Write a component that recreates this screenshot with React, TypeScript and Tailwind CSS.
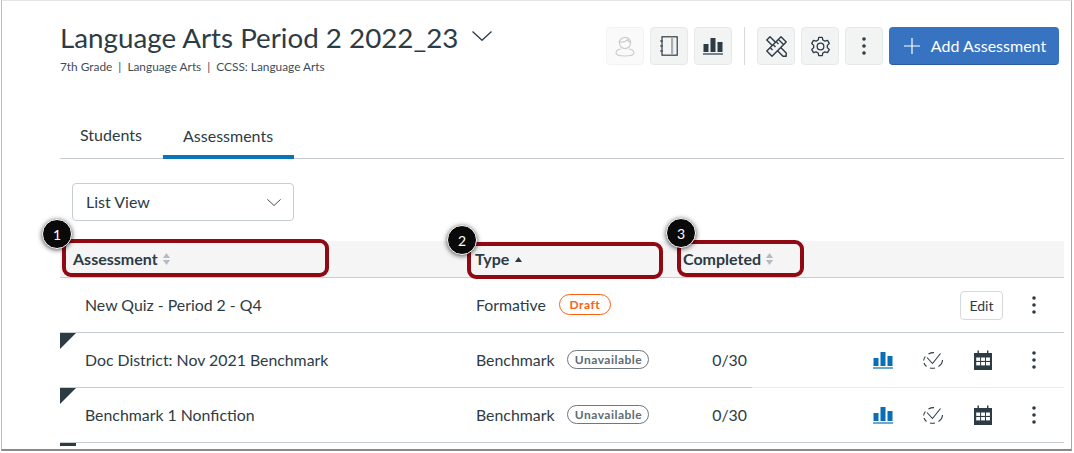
const dark = '#2d3b45';

const BarsIcon = ({ color = dark }: { color?: string }) => (
  <svg width="20" height="18" viewBox="0 0 20 18" fill={color}>
    <rect x="0.5" y="7" width="5" height="8" />
    <rect x="7.5" y="1" width="5" height="14" />
    <rect x="14.5" y="5" width="5" height="10" />
    <rect x="0" y="16.4" width="20" height="1.2" />
  </svg>
);

const KebabIcon = () => (
  <svg width="4" height="18" viewBox="0 0 4 18" fill={dark}>
    <circle cx="2" cy="2" r="1.8" />
    <circle cx="2" cy="9" r="1.8" />
    <circle cx="2" cy="16" r="1.8" />
  </svg>
);

const ChevronDown = ({ w, h }: { w: number; h: number }) => (
  <svg width={w} height={h} viewBox="0 0 20 10" fill="none" stroke={dark} strokeWidth="1.3">
    <path d="M0.5 0.5 L10 9.3 L19.5 0.5" />
  </svg>
);

const SortIcon = () => (
  <svg width="7" height="12" viewBox="0 0 7 12" fill="#b4bac0">
    <path d="M3.5 0 L7 5 H0 Z" />
    <path d="M3.5 12 L7 7 H0 Z" />
  </svg>
);

const ClockCheck = () => (
  <svg width="22" height="18" viewBox="0 0 22 18" fill="none" stroke={dark} strokeWidth="1.1">
    <path d="M6.5 3 A9 8 0 0 1 12 1.6" />
    <path d="M3.4 5.5 A9 8 0 0 0 1.6 9.5" />
    <path d="M2 12 A9 8 0 0 0 4.5 15.5" />
    <path d="M8 17 A9 8 0 0 0 13 17" />
    <path d="M16.5 15.5 A9 8 0 0 0 20.5 9" />
    <path d="M5 6.5 L10.5 12.5 L18.5 2.5" />
  </svg>
);

const CalendarIcon = () => (
  <svg width="18" height="20" viewBox="0 0 18 20">
    <path d="M0 3 H18 V20 H0 Z" fill={dark} />
    <rect x="3.5" y="0.5" width="1.4" height="4" fill={dark} />
    <rect x="13" y="0.5" width="1.4" height="4" fill={dark} />
    <g fill="#fff">
      <rect x="2.2" y="7.5" width="3.9" height="3.4" />
      <rect x="7.1" y="7.5" width="3.9" height="3.4" />
      <rect x="12" y="7.5" width="3.9" height="3.4" />
      <rect x="2.2" y="12" width="3.9" height="3.4" />
      <rect x="7.1" y="12" width="3.9" height="3.4" />
      <rect x="12" y="12" width="3.9" height="3.4" />
    </g>
  </svg>
);

const NotebookIcon = () => (
  <svg width="18" height="20" viewBox="0 0 18 20" fill="none" stroke={dark} strokeWidth="1.2">
    <rect x="2" y="0.8" width="15.2" height="18.4" />
    <rect x="11" y="1" width="2.2" height="18" fill="#a8afb5" stroke="none" />
    <path d="M0 5 H3 M0 10 H3 M0 15 H3" />
  </svg>
);

const StudentIcon = () => (
  <svg width="20" height="21" viewBox="0 0 20 21" fill="none" stroke="#c9cdd0" strokeWidth="1.2">
    <circle cx="10" cy="7" r="5.6" />
    <path d="M5 6 C8 6.5 11 5.5 12.5 3.5 C13 5 14 6 15.5 6.5" />
    <path d="M6 13 C2.5 13.5 1 15 1 17 C1 19 4 20 10 20 C16 20 19 19 19 17 C19 15 17.5 13.5 14 13" />
  </svg>
);

const ToolsIcon = () => (
  <svg width="21" height="21" viewBox="0 0 21 21" fill="none" stroke={dark} strokeWidth="1.4" strokeLinejoin="round">
    <path d="M0.8 4 L4 0.8 L20.2 17 L20.2 20.2 L17 20.2 Z" fill="#f2f4f4" />
    <path d="M15 0.8 L20.2 6 L6 20.2 L0.8 15 Z" fill="#f2f4f4" />
    <path d="M12.5 3.5 L17.5 8.5 M4.5 12 L6.5 14 M7.5 9 L9.5 11 M10.5 6 L12.5 8" />
  </svg>
);

const GearIcon = () => (
  <svg width="21" height="21" viewBox="0 0 24 24" fill="none" stroke={dark} strokeWidth="1.5" strokeLinejoin="round">
    <path d="M10 1.5 H14 L14.7 4.6 L17 5.9 L20 5 L22 8.5 L19.8 10.7 V13.3 L22 15.5 L20 19 L17 18.1 L14.7 19.4 L14 22.5 H10 L9.3 19.4 L7 18.1 L4 19 L2 15.5 L4.2 13.3 V10.7 L2 8.5 L4 5 L7 5.9 L9.3 4.6 Z" />
    <circle cx="12" cy="12" r="3.8" />
  </svg>
);

const IconButton = ({ children, faded }: { children: React.ReactNode; faded?: boolean }) => (
  <div
    className={`w-[38px] h-[38px] flex items-center justify-center rounded border ${
      faded ? 'bg-[#fafafa] border-[#f3f3f3]' : 'bg-[#f2f4f4] border-[#e6e9ea]'
    }`}
  >
    {children}
  </div>
);

const Callout = ({ n, className }: { n: number; className: string }) => (
  <div
    className={`absolute w-[30px] h-[30px] rounded-full bg-[#0a0a0a] border border-white text-white text-[14px] flex items-center justify-center shadow-[0_1px_5px_rgba(0,0,0,0.7)] ${className}`}
  >
    {n}
  </div>
);

const Highlight = ({ className }: { className: string }) => (
  <div className={`absolute border-4 border-[#8f0a12] rounded-[9px] ${className}`} />
);

const Pill = ({ label, className }: { label: string; className: string }) => (
  <span
    className={`inline-flex items-center justify-center rounded-full border font-bold tracking-[0.5px] ${className}`}
  >
    {label}
  </span>
);

const BenchmarkRow = ({ name, fade }: { name: string; fade?: boolean }) => (
  <div className="relative h-[55px] flex items-center border-b border-[#c7cdd1] text-[15.85px]">
    <div className="absolute left-0 top-0 w-0 h-0 border-t-[16px] border-t-[#2d3b45] border-r-[16px] border-r-transparent" />
    <div className="w-[416px] pl-[25px] shrink-0">{name}</div>
    <div className="w-[226px] shrink-0 flex items-center gap-[13px]">
      Benchmark
      <Pill
        label="Unavailable"
        className="w-[82px] h-[19px] text-[12px] tracking-[0.2px] text-[#5d6b75] border-[#6d7883]"
      />
    </div>
    <div className="w-[45px] shrink-0 text-right">0/30</div>
    <div className="ml-[126px] w-[20px] flex justify-center">
      <BarsIcon color="#0a6eb4" />
    </div>
    <div className="ml-[29px] flex justify-center">
      <ClockCheck />
    </div>
    <div className="ml-[30px] flex justify-center">
      <CalendarIcon />
    </div>
    <div className="ml-[40px] flex justify-center">
      <KebabIcon />
    </div>
    {fade && <div className="absolute left-[692px] right-0 -bottom-px h-px bg-[#e9ecee]" />}
  </div>
);

export default function App() {
  return (
    <div
      className="relative ml-px w-[1071px] h-[451px] bg-white border border-t-[#e4e4e4] border-l-[#bcbcbc] border-r-[#a8a8a8] border-b-2 border-b-[#8a8a8a] overflow-hidden text-[#2d3b45]"
      style={{ fontFamily: 'Lato, sans-serif' }}
    >
      <div className="pl-[58px] pr-[7px]">
        {/* Header */}
        <div className="flex items-start justify-between pt-[19px] pr-[5px] h-[102px]">
          <div className="pl-px">
            <div className="flex items-center">
              <h1 className="text-[27.75px] leading-[35px] font-normal -ml-px">Language Arts Period 2 2022_23</h1>
              <span className="ml-[14px] -mt-[3px]">
                <ChevronDown w={20} h={10} />
              </span>
            </div>
            <p className="text-[11.85px] leading-[14px] mt-[5px] -ml-px text-[#3f4c56]">
              7th Grade&nbsp; |&nbsp; Language Arts&nbsp; |&nbsp; CCSS: Language Arts
            </p>
          </div>
          <div className="flex items-center pt-[7px]">
            <div className="flex gap-[6px]">
              <IconButton faded>
                <StudentIcon />
              </IconButton>
              <IconButton>
                <NotebookIcon />
              </IconButton>
              <IconButton>
                <BarsIcon />
              </IconButton>
            </div>
            <div className="w-px h-[38px] bg-[#d5d9dc] mx-[12px]" />
            <div className="flex gap-[6px]">
              <IconButton>
                <ToolsIcon />
              </IconButton>
              <IconButton>
                <GearIcon />
              </IconButton>
              <IconButton>
                <KebabIcon />
              </IconButton>
            </div>
            <button className="ml-[6px] w-[170px] h-[38px] rounded bg-[#3873c1] border-b border-[#2c5c9c] text-white text-[16px] flex items-center justify-center gap-[11px] pl-[2px]">
              <svg width="16" height="16" viewBox="0 0 16 16" stroke="#fff" strokeWidth="1.2">
                <path d="M8 0 V16 M0 8 H16" />
              </svg>
              Add Assessment
            </button>
          </div>
        </div>

        {/* Tabs */}
        <div className="flex h-[56px] items-end border-b border-[#c7cdd1] text-[16px]">
          <div className="w-[103px] h-[56px] pl-[20px] pt-[21px]">Students</div>
          <div className="w-[131px] h-[56px] pl-[20px] pt-[21px] border-b-[4px] border-[#0a74b9] -mb-px">
            Assessments
          </div>
        </div>

        {/* View select */}
        <div className="pl-[12px] pt-[24px] h-[82px]">
          <div className="w-[222px] h-[38px] border border-[#c7cdd1] rounded flex items-center justify-between pl-[13px] pr-[12px] text-[16px]">
            List View
            <ChevronDown w={14} h={7} />
          </div>
        </div>

        {/* Table */}
        <div className="h-[37px] bg-[#f5f5f5] border-b border-[#c7cdd1] flex items-center font-bold text-[16px]">
          <div className="w-[415px] pl-[13px] shrink-0 flex items-center gap-[5px]">
            Assessment
            <SortIcon />
          </div>
          <div className="w-[208px] shrink-0 flex items-center gap-[6px]">
            Type
            <svg width="7" height="5" viewBox="0 0 7 5" fill={dark}>
              <path d="M3.5 0 L7 5 H0 Z" />
            </svg>
          </div>
          <div className="flex items-center gap-[5px]">
            Completed
            <SortIcon />
          </div>
        </div>
        <div className="h-[55px] flex items-center border-b border-[#c7cdd1] text-[15.85px]">
          <div className="w-[416px] pl-[25px] shrink-0">New Quiz - Period 2 - Q4</div>
          <div className="flex items-center gap-[13px]">
            Formative
            <Pill label="Draft" className="w-[52px] h-[21px] text-[12px] text-[#fc5e13] border-[#fc5e13]" />
          </div>
          <div className="ml-auto flex items-center">
            <div className="w-[43px] h-[29px] border border-[#d5d9dc] rounded flex items-center justify-center text-[14px]">
              Edit
            </div>
            <div className="ml-[29px] mr-[28px]">
              <KebabIcon />
            </div>
          </div>
        </div>
        <BenchmarkRow name="Doc District: Nov 2021 Benchmark" fade />
        <BenchmarkRow name="Benchmark 1 Nonfiction" />
        <div className="w-[16px] h-[3px] bg-[#2d3b45]" />
      </div>

      {/* Annotations */}
      <Highlight className="left-[60px] top-[238px] w-[267px] h-[38px]" />
      <Highlight className="left-[465px] top-[241px] w-[196px] h-[37px]" />
      <Highlight className="left-[675px] top-[239px] w-[127px] h-[37px]" />
      <Callout n={1} className="left-[40px] top-[218px]" />
      <Callout n={2} className="left-[445px] top-[224px]" />
      <Callout n={3} className="left-[664px] top-[217px]" />
    </div>
  );
}
